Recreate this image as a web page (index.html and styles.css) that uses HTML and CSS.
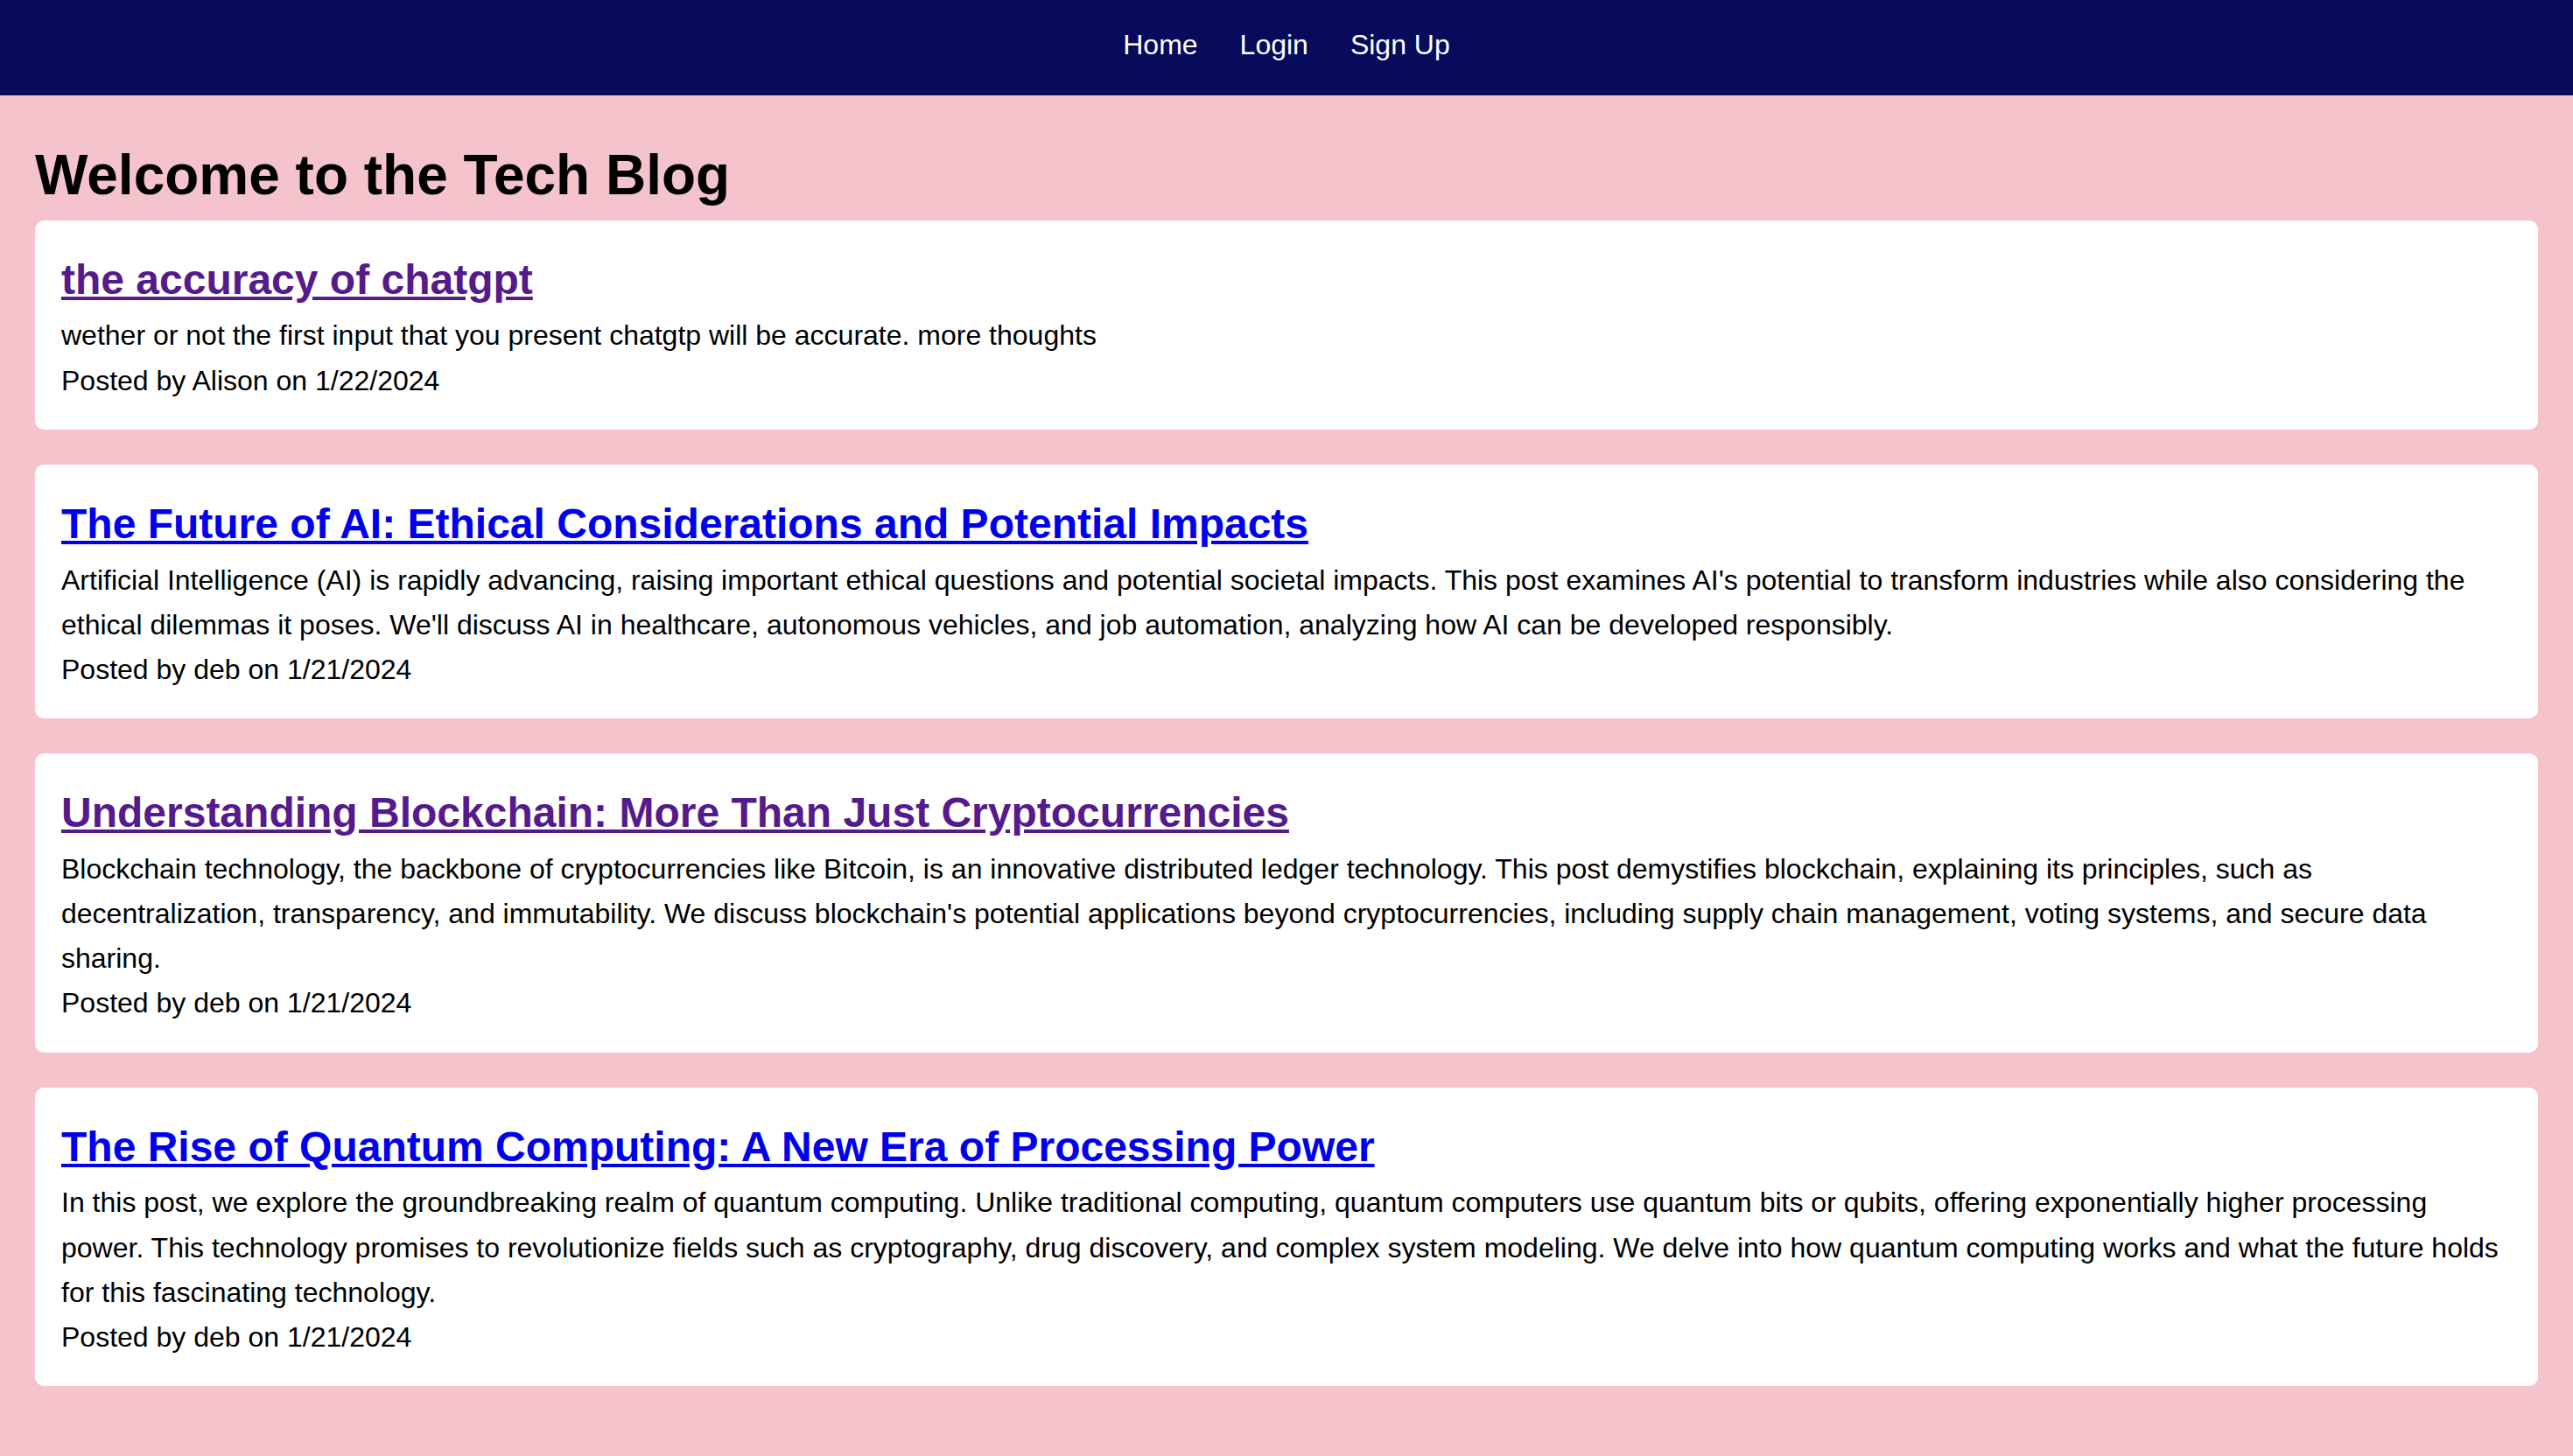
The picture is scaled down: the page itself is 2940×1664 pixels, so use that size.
FILE: index.html
```html
<!DOCTYPE html>
<html lang="en">
<head>
<meta charset="utf-8">
<title>Tech Blog</title>
<link rel="stylesheet" href="styles.css">
</head>
<body>
<nav class="topnav">
  <a class="navlink" href="#home">Home</a>
  <a class="navlink" href="#login">Login</a>
  <a class="navlink" href="#signup">Sign Up</a>
</nav>
<main class="content">
  <h1 class="page-title">Welcome to the Tech Blog</h1>
  <article class="post">
    <h2 class="post-title"><a class="visited" href="#p1">the accuracy of chatgpt</a></h2>
    <p class="post-body">wether or not the first input that you present chatgtp will be accurate. more thoughts</p>
    <p class="post-meta">Posted by Alison on 1/22/2024</p>
  </article>
  <article class="post">
    <h2 class="post-title"><a class="unvisited" href="#p2">The Future of AI: Ethical Considerations and Potential Impacts</a></h2>
    <p class="post-body">Artificial Intelligence (AI) is rapidly advancing, raising important ethical questions and potential societal impacts. This post examines AI's potential to transform industries while also considering the ethical dilemmas it poses. We'll discuss AI in healthcare, autonomous vehicles, and job automation, analyzing how AI can be developed responsibly.</p>
    <p class="post-meta">Posted by deb on 1/21/2024</p>
  </article>
  <article class="post">
    <h2 class="post-title"><a class="visited" href="#p3">Understanding Blockchain: More Than Just Cryptocurrencies</a></h2>
    <p class="post-body">Blockchain technology, the backbone of cryptocurrencies like Bitcoin, is an innovative distributed ledger technology. This post demystifies blockchain, explaining its principles, such as decentralization, transparency, and immutability. We discuss blockchain's potential applications beyond cryptocurrencies, including supply chain management, voting systems, and secure data sharing.</p>
    <p class="post-meta">Posted by deb on 1/21/2024</p>
  </article>
  <article class="post">
    <h2 class="post-title"><a class="unvisited" href="#p4">The Rise of Quantum Computing: A New Era of Processing Power</a></h2>
    <p class="post-body">In this post, we explore the groundbreaking realm of quantum computing. Unlike traditional computing, quantum computers use quantum bits or qubits, offering exponentially higher processing power. This technology promises to revolutionize fields such as cryptography, drug discovery, and complex system modeling. We delve into how quantum computing works and what the future holds for this fascinating technology.</p>
    <p class="post-meta">Posted by deb on 1/21/2024</p>
  </article>
</main>
</body>
</html>
```

FILE: styles.css
```css
html, body {
  margin: 0;
  padding: 0;
}

body {
  background: #f4c3cc;
  color: #000;
  font-family: "Liberation Sans", Arial, Helvetica, sans-serif;
  font-size: 32px;
  line-height: 1.6;
}

.topnav {
  background: #080a5c;
  display: flex;
  justify-content: center;
  gap: 48px;
  padding: 26px 0 32px;
}

.navlink {
  color: #fff;
  text-decoration: none;
}

.content {
  padding: 40px 40px 39px;
}

.page-title {
  font-size: 64px;
  font-weight: bold;
  margin: 0;
}

.post {
  background: #fff;
  border-radius: 10px;
  padding: 30px;
  margin-bottom: 40px;
}

.post-title {
  font-size: 48px;
  font-weight: bold;
  margin: 0;
}

.post-title a.visited {
  color: #551a8b;
}

.post-title a.unvisited {
  color: #0000ee;
}

.post-body,
.post-meta {
  margin: 0;
}
```
